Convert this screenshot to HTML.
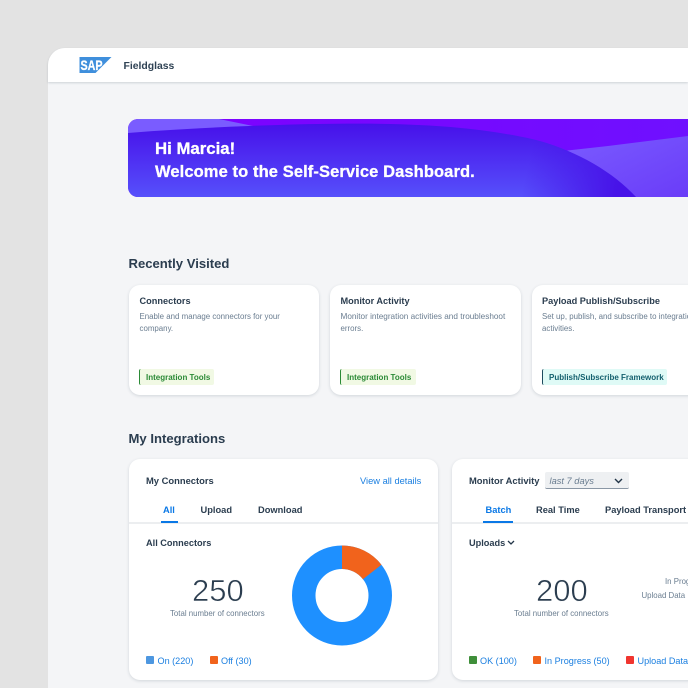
<!DOCTYPE html>
<html lang="en">
<head>
<meta charset="utf-8">
<title>SAP Fieldglass Dashboard</title>
<style>
html,body{margin:0;padding:0;width:688px;height:688px;overflow:hidden}
body{background:#e3e3e3;font-family:"Liberation Sans",sans-serif;color:#223548}
#root{position:relative;width:688px;height:688px;overflow:hidden}
.a{position:absolute;white-space:nowrap}
.win{position:absolute;left:48px;top:48px;width:640px;height:640px;background:#f4f5f7;border-radius:17px 0 0 0;overflow:hidden}
.hdr{position:absolute;left:48px;top:48px;width:640px;height:34px;background:#fff;border-radius:17px 0 0 0;box-shadow:0 1px 2px rgba(34,53,72,.18)}
.card{position:absolute;background:#fff;border-radius:11px;box-shadow:0 1px 3px rgba(34,53,72,.16)}
.h2{font-size:13.1px;font-weight:bold;line-height:16px;color:#2b3d4f}
.t{font-size:9.2px;font-weight:bold;line-height:12px;color:#2b3d4f}
.d{font-size:7.9px;line-height:12px;color:#6a7d90}
.tag{position:absolute;height:16px;line-height:17px;font-size:8px;font-weight:bold;border-radius:2px}
.tab{font-size:9.3px;font-weight:bold;line-height:12px;color:#2b3d4f}
.leg{font-size:9.1px;line-height:12px;color:#1b7fe0}
.sw{position:absolute;width:8px;height:8px;border-radius:1px}
.num{font-size:31px;line-height:34px;color:#2b3d4f;font-weight:normal;-webkit-text-stroke:.55px #fff}
.cap{font-size:7.85px;line-height:10px;color:#6a7d90}
</style>
</head>
<body>
<div id="root">
<div class="win"></div>
<div class="hdr"></div>

<svg class="a" style="left:79px;top:57px" width="33" height="17" viewBox="0 0 33 17">
<path d="M0.5 0H32.500L16.500 16H0.500Z" fill="#3f8fdc"/>
<text x="1.500" y="13" font-family="Liberation Sans" font-size="14" font-weight="bold" fill="#fff" stroke="#fff" stroke-width=".3" textLength="22" lengthAdjust="spacingAndGlyphs">SAP</text>
</svg>
<div class="a" style="left:123.500px;top:60px;font-size:10.400px;line-height:13px;font-weight:bold;color:#2f4254">Fieldglass</div>

<svg class="a" style="left:128px;top:119px" width="560" height="78" viewBox="0 0 560 78">
<defs>
<clipPath id="c"><path d="M10 0H560V78H10A10 10 0 0 1 0 68V10A10 10 0 0 1 10 0Z"/></clipPath>
<linearGradient id="g" x1="0" y1="0" x2="0" y2="1"><stop offset="0" stop-color="#4710ea"/><stop offset="1" stop-color="#5650fb"/></linearGradient>
<linearGradient id="e" gradientUnits="userSpaceOnUse" x1="400" y1="45" x2="490" y2="65"><stop offset="0" stop-color="#4713e8" stop-opacity="0"/><stop offset="1" stop-color="#4713e8"/></linearGradient>
<linearGradient id="r" x1="0" y1="0" x2="1" y2="1"><stop offset="0" stop-color="#7a5cff"/><stop offset="1" stop-color="#6a3cf8"/></linearGradient>
<linearGradient id="p" x1="0" y1="0" x2="1" y2="0"><stop offset="0" stop-color="#7f00ff"/><stop offset="1" stop-color="#6f10ff"/></linearGradient>
</defs>
<g clip-path="url(#c)">
<rect width="560" height="78" fill="url(#p)"/>
<path d="M0 0H91L130 8L0 16Z" fill="#7a5cff"/>
<path d="M435 32L480 27L560 17V78H495Z" fill="url(#r)"/>
<path id="w" d="M0 14C50 10 100 7.500 150 6C200 4.500 250 4 290 6C340 8 385 15 412 22C450 33 485 53 508 78H0Z" fill="url(#g)"/>
<path d="M0 14C50 10 100 7.500 150 6C200 4.500 250 4 290 6C340 8 385 15 412 22C450 33 485 53 508 78H0Z" fill="url(#e)"/>
</g>
</svg>
<div class="a" style="left:155px;top:139px;font-size:16.800px;line-height:19px;font-weight:bold;color:#fff;-webkit-text-stroke:.3px #fff">Hi Marcia!</div>
<div class="a" style="left:155px;top:163px;font-size:16.500px;line-height:19px;font-weight:bold;color:#fff;letter-spacing:.1px;-webkit-text-stroke:.3px #fff">Welcome to the Self-Service Dashboard.</div>

<div class="a h2" style="left:128.500px;top:256px">Recently Visited</div>

<div class="card" style="left:129px;top:285px;width:190px;height:110px"></div>
<div class="a t" style="left:139.500px;top:295px">Connectors</div>
<div class="a d" style="left:139.500px;top:311px">Enable and manage connectors for your</div>
<div class="a d" style="left:139.500px;top:323px">company.</div>
<div class="tag" style="left:139px;top:369px;width:68px;padding-left:6px;background:#f1f9e4;color:#2b8a36;border-left:1px solid #2b8a36">Integration Tools</div>

<div class="card" style="left:330px;top:285px;width:191px;height:110px"></div>
<div class="a t" style="left:340.500px;top:295px">Monitor Activity</div>
<div class="a d" style="left:340.500px;top:311px;font-size:8.200px">Monitor integration activities and troubleshoot</div>
<div class="a d" style="left:340.500px;top:323px">errors.</div>
<div class="tag" style="left:340px;top:369px;width:69px;padding-left:6px;background:#f1f9e4;color:#2b8a36;border-left:1px solid #2b8a36">Integration Tools</div>

<div class="card" style="left:532px;top:285px;width:200px;height:110px"></div>
<div class="a t" style="left:542px;top:295px">Payload Publish/Subscribe</div>
<div class="a d" style="left:542px;top:311px">Set up, publish, and subscribe to integration</div>
<div class="a d" style="left:542px;top:323px">activities.</div>
<div class="tag" style="left:542px;top:369px;width:118px;padding-left:6px;background:#dffaf6;color:#13606e;border-left:1px solid #1c4a5e">Publish/Subscribe Framework</div>

<div class="a h2" style="left:128.500px;top:431px">My Integrations</div>

<div class="card" style="left:129px;top:459px;width:309px;height:221px"></div>
<div class="a t" style="left:146px;top:475px;font-size:9.400px">My Connectors</div>
<div class="a" style="left:360px;top:475px;font-size:9.300px;line-height:12px;color:#1b7fe0">View all details</div>
<div class="a tab" style="left:163px;top:503.500px;color:#0a78e6">All</div>
<div class="a tab" style="left:200.500px;top:503.500px">Upload</div>
<div class="a tab" style="left:258px;top:503.500px">Download</div>
<div class="a" style="left:129px;top:522px;width:309px;height:2px;background:#eceef0"></div>
<div class="a" style="left:161px;top:521px;width:16.500px;height:2px;background:#0a78e6"></div>
<div class="a t" style="left:146px;top:537px">All Connectors</div>
<div class="a num" style="left:192px;top:574px">250</div>
<div class="a cap" style="left:170px;top:608.500px">Total number of connectors</div>
<svg class="a" style="left:290px;top:544px" width="104" height="104" viewBox="0 0 104 104">
<circle cx="52" cy="51.500" r="38.250" fill="none" stroke="#1e90ff" stroke-width="23.500"/>
<path d="M52 1.500A50 50 0 0 1 91.400 20.700L72.900 35.200A26.500 26.500 0 0 0 52 25Z" fill="#f1631c"/>
</svg>
<div class="sw" style="left:146px;top:656px;background:#4d97e0"></div>
<div class="a leg" style="left:157.500px;top:654.500px">On (220)</div>
<div class="sw" style="left:210px;top:656px;background:#f1631c"></div>
<div class="a leg" style="left:221px;top:654.500px">Off (30)</div>

<div class="card" style="left:452px;top:459px;width:300px;height:221px"></div>
<div class="a t" style="left:469px;top:475px;font-size:9.400px">Monitor Activity</div>
<div class="a" style="left:545px;top:472px;width:84px;height:16px;background:#eef0f2;border-bottom:1px solid #8a97a5;border-radius:2px"></div>
<div class="a" style="left:549.500px;top:474.500px;font-size:9.300px;font-style:italic;line-height:12px;color:#6a7d90">last 7 days</div>
<svg class="a" style="left:614px;top:477.500px" width="9" height="6" viewBox="0 0 9 6"><path d="M1 1L4.500 4.500L8 1" fill="none" stroke="#223548" stroke-width="1.400"/></svg>
<div class="a tab" style="left:485.500px;top:503.500px;color:#0a78e6">Batch</div>
<div class="a tab" style="left:536px;top:503.500px">Real Time</div>
<div class="a tab" style="left:605px;top:503.500px">Payload Transport</div>
<div class="a" style="left:452px;top:522px;width:236px;height:2px;background:#eceef0"></div>
<div class="a" style="left:483px;top:521px;width:30px;height:2px;background:#0a78e6"></div>
<div class="a t" style="left:469px;top:537px">Uploads</div>
<svg class="a" style="left:506.500px;top:539.500px" width="8" height="6" viewBox="0 0 8 6"><path d="M1 1L4 4L7 1" fill="none" stroke="#223548" stroke-width="1.300"/></svg>
<div class="a num" style="left:536px;top:574px">200</div>
<div class="a cap" style="left:514px;top:608.500px">Total number of connectors</div>
<div class="a cap" style="left:665px;top:576.500px">In Progress</div>
<div class="a cap" style="left:641.500px;top:590.500px">Upload Data</div>
<div class="sw" style="left:469px;top:656px;background:#3f8f3a"></div>
<div class="a leg" style="left:480px;top:654.500px">OK (100)</div>
<div class="sw" style="left:533px;top:656px;background:#f1631c"></div>
<div class="a leg" style="left:544.500px;top:654.500px">In Progress (50)</div>
<div class="sw" style="left:626px;top:656px;background:#f0352f"></div>
<div class="a leg" style="left:637.500px;top:654.500px">Upload Data Failed</div>
</div>
</body>
</html>
